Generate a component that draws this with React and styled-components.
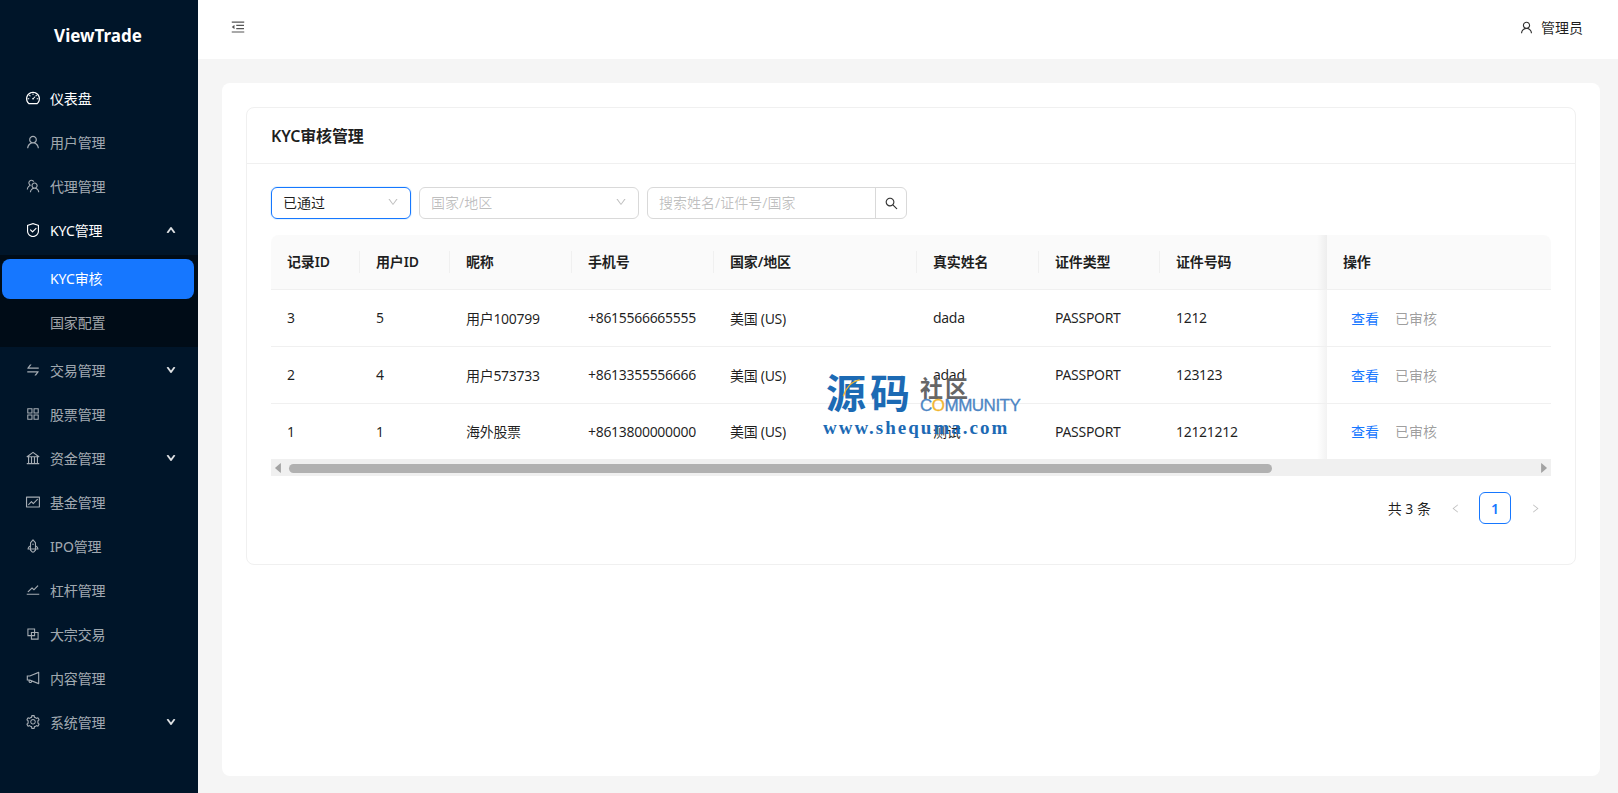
import React from "react";
import styled, { createGlobalStyle } from "styled-components";
import {
  AiOutlineDashboard,
  AiOutlineUser,
  AiOutlineTeam,
  AiOutlineSafety,
  AiOutlineSwap,
  AiOutlineAppstore,
  AiOutlineBank,
  AiOutlineFund,
  AiOutlineRocket,
  AiOutlineStock,
  AiOutlineBlock,
  AiOutlineNotification,
  AiOutlineSetting,
  AiOutlineMenuFold,
  AiOutlineSearch,
  AiOutlineDown,
  AiOutlineUp,
  AiOutlineLeft,
  AiOutlineRight,
  AiFillCaretLeft,
  AiFillCaretRight,
} from "react-icons/ai";

const menuTop = [
  { icon: AiOutlineDashboard, label: "仪表盘", bright: true },
  { icon: AiOutlineUser, label: "用户管理" },
  { icon: AiOutlineTeam, label: "代理管理" },
  { icon: AiOutlineSafety, label: "KYC管理", bright: true, arrow: "up" },
];

const menuBottom = [
  { icon: AiOutlineSwap, label: "交易管理", arrow: "down" },
  { icon: AiOutlineAppstore, label: "股票管理" },
  { icon: AiOutlineBank, label: "资金管理", arrow: "down" },
  { icon: AiOutlineFund, label: "基金管理" },
  { icon: AiOutlineRocket, label: "IPO管理" },
  { icon: AiOutlineStock, label: "杠杆管理" },
  { icon: AiOutlineBlock, label: "大宗交易" },
  { icon: AiOutlineNotification, label: "内容管理" },
  { icon: AiOutlineSetting, label: "系统管理", arrow: "down" },
];

const columns = [
  { title: "记录ID", width: 89 },
  { title: "用户ID", width: 90 },
  { title: "昵称", width: 122 },
  { title: "手机号", width: 142 },
  { title: "国家/地区", width: 203 },
  { title: "真实姓名", width: 122 },
  { title: "证件类型", width: 121 },
  { title: "证件号码", width: 167 },
];

const rows = [
  ["3", "5", "用户100799", "+8615566665555", "美国 (US)", "dada", "PASSPORT", "1212"],
  ["2", "4", "用户573733", "+8613355556666", "美国 (US)", "adad", "PASSPORT", "123123"],
  ["1", "1", "海外股票", "+8613800000000", "美国 (US)", "测试", "PASSPORT", "12121212"],
];

function MenuRow({ item }) {
  const Icon = item.icon;
  return (
    <MenuItem $bright={item.bright}>
      <Icon size={16} />
      <span>{item.label}</span>
      {item.arrow === "up" && <Arrow as={AiOutlineUp} />}
      {item.arrow === "down" && <Arrow as={AiOutlineDown} />}
    </MenuItem>
  );
}

function App() {
  return (
    <Layout>
      <GlobalStyle />
      <Sidebar>
        <Logo>ViewTrade</Logo>
        <Menu>
          {menuTop.map((item) => (
            <MenuRow key={item.label} item={item} />
          ))}
          <SubMenu>
            <SubItem $active>KYC审核</SubItem>
            <SubItem>国家配置</SubItem>
          </SubMenu>
          {menuBottom.map((item) => (
            <MenuRow key={item.label} item={item} />
          ))}
        </Menu>
      </Sidebar>
      <Main>
        <Header>
          <AiOutlineMenuFold size={16} color="#555" />
          <UserBox>
            <AiOutlineUser size={15} color="#333" />
            <span>管理员</span>
          </UserBox>
        </Header>
        <Content>
          <Panel>
            <Card>
              <CardTitle>KYC审核管理</CardTitle>
              <CardBody>
                <Filters>
                  <Select $width={140} $focused>
                    <span>已通过</span>
                    <AiOutlineDown size={12} color="#bfbfbf" />
                  </Select>
                  <Select $width={220} $placeholder>
                    <span>国家/地区</span>
                    <AiOutlineDown size={12} color="#bfbfbf" />
                  </Select>
                  <SearchBox>
                    <SearchText>搜索姓名/证件号/国家</SearchText>
                    <SearchButton>
                      <AiOutlineSearch size={15} color="#333" />
                    </SearchButton>
                  </SearchBox>
                </Filters>
                <Table>
                  <colgroup>
                    {columns.map((col) => (
                      <col key={col.title} style={{ width: col.width }} />
                    ))}
                    <col />
                  </colgroup>
                  <thead>
                    <tr>
                      {columns.map((col) => (
                        <HeadCell key={col.title}>{col.title}</HeadCell>
                      ))}
                      <FixedHead>操作</FixedHead>
                    </tr>
                  </thead>
                  <tbody>
                    {rows.map((row) => (
                      <BodyRow key={row[0]}>
                        {row.map((value, i) => (
                          <Cell key={i}>{value}</Cell>
                        ))}
                        <FixedCell>
                          <ViewLink>查看</ViewLink>
                          <DoneText>已审核</DoneText>
                        </FixedCell>
                      </BodyRow>
                    ))}
                  </tbody>
                </Table>
                <ScrollBar>
                  <AiFillCaretLeft size={14} color="#a3a3a3" />
                  <ScrollTrack>
                    <ScrollThumb />
                  </ScrollTrack>
                  <AiFillCaretRight size={14} color="#a3a3a3" />
                </ScrollBar>
                <Pagination>
                  <Total>共 3 条</Total>
                  <PageArrow>
                    <AiOutlineLeft size={11} />
                  </PageArrow>
                  <PageNumber>1</PageNumber>
                  <PageArrow>
                    <AiOutlineRight size={11} />
                  </PageArrow>
                </Pagination>
              </CardBody>
            </Card>
          </Panel>
        </Content>
      </Main>
      <Watermark>
        <MarkTop>
          <MarkBig>
            源码
            <MarkArc viewBox="0 0 30 30">
              <path d="M2 28 C6 14 16 4 28 2" fill="none" stroke="#f2b632" strokeWidth="2" />
            </MarkArc>
          </MarkBig>
          <MarkSide>
            <MarkCn>社区</MarkCn>
            <MarkEn>
              C<MarkO>O</MarkO>MMUNITY
            </MarkEn>
          </MarkSide>
        </MarkTop>
        <MarkUrl>www.shequma.com</MarkUrl>
      </Watermark>
    </Layout>
  );
}

const GlobalStyle = createGlobalStyle`
  html, body {
    margin: 0;
    padding: 0;
    height: 100%;
    overflow: hidden;
  }
  body {
    font-family: "Noto Sans", "Noto Sans CJK SC", sans-serif;
    font-size: 14px;
    color: rgba(0, 0, 0, 0.88);
  }
`;

const Layout = styled.div`
  display: flex;
  height: 793px;
  position: relative;
  background: #f5f5f5;
`;

const Sidebar = styled.aside`
  width: 198px;
  flex-shrink: 0;
  background: #001529;
`;

const Logo = styled.div`
  height: 71px;
  line-height: 71px;
  text-align: center;
  color: #fff;
  font-size: 17px;
  font-weight: 700;
  padding-right: 2px;
  box-sizing: border-box;
`;

const Menu = styled.nav`
  display: flex;
  flex-direction: column;
  padding-top: 6px;
`;

const MenuItem = styled.div`
  height: 40px;
  margin: 2px 0;
  display: flex;
  align-items: center;
  gap: 9px;
  padding: 0 22px 2px 25px;
  box-sizing: border-box;
  font-size: 14px;
  letter-spacing: -0.15px;
  color: ${(props) => (props.$bright ? "#fff" : "rgba(255, 255, 255, 0.65)")};
  svg {
    flex-shrink: 0;
  }
`;

const Arrow = styled.svg`
  margin-left: auto;
  width: 10px;
  height: 10px;
  stroke-width: 110px;
  stroke: currentColor;
  color: rgba(255, 255, 255, 0.75);
`;

const SubMenu = styled.div`
  background: #000c17;
  margin: 2px 0;
  padding: 4px 0;
  display: flex;
  flex-direction: column;
  gap: 4px;
`;

const SubItem = styled.div`
  height: 40px;
  margin: 0 4px 0 2px;
  padding: 0 0 2px 48px;
  box-sizing: border-box;
  display: flex;
  align-items: center;
  border-radius: 8px;
  letter-spacing: -0.15px;
  background: ${(props) => (props.$active ? "#1677ff" : "transparent")};
  color: ${(props) => (props.$active ? "#fff" : "rgba(255, 255, 255, 0.65)")};
`;

const Main = styled.div`
  flex: 1;
  min-width: 0;
  display: flex;
  flex-direction: column;
`;

const Header = styled.header`
  height: 59px;
  flex-shrink: 0;
  background: #fff;
  display: flex;
  align-items: center;
  justify-content: space-between;
  padding: 0 35px 5px 32px;
  box-sizing: border-box;
`;

const UserBox = styled.div`
  display: flex;
  align-items: center;
  gap: 7px;
  font-size: 14px;
`;

const Content = styled.main`
  flex: 1;
  padding: 24px 18px 17px 24px;
  min-height: 0;
`;

const Panel = styled.div`
  height: 100%;
  box-sizing: border-box;
  background: #fff;
  border-radius: 8px;
  padding: 24px 24px 0;
`;

const Card = styled.section`
  border: 1px solid #f0f0f0;
  border-radius: 8px;
  height: 458px;
  box-sizing: border-box;
`;

const CardTitle = styled.h2`
  margin: 0;
  padding: 0 24px 1px;
  height: 54px;
  display: flex;
  align-items: center;
  font-size: 16px;
  font-weight: 600;
  letter-spacing: -0.2px;
  border-bottom: 1px solid #f0f0f0;
`;

const CardBody = styled.div`
  padding: 23px 24px 0;
`;

const Filters = styled.div`
  display: flex;
  gap: 8px;
  margin-bottom: 16px;
`;

const Select = styled.div`
  width: ${(props) => props.$width}px;
  height: 32px;
  box-sizing: border-box;
  display: flex;
  align-items: center;
  justify-content: space-between;
  padding: 0 11px 2px 11px;
  border-radius: 6px;
  border: 1px solid ${(props) => (props.$focused ? "#1677ff" : "#d9d9d9")};
  box-shadow: ${(props) => (props.$focused ? "0 0 0 1px rgba(5, 145, 255, 0.1)" : "none")};
  color: ${(props) => (props.$placeholder ? "rgba(0, 0, 0, 0.25)" : "rgba(0, 0, 0, 0.88)")};
`;

const SearchBox = styled.div`
  width: 260px;
  height: 32px;
  box-sizing: border-box;
  display: flex;
  align-items: center;
  border: 1px solid #d9d9d9;
  border-radius: 6px;
`;

const SearchText = styled.div`
  flex: 1;
  padding: 0 0 2px 11px;
  color: rgba(0, 0, 0, 0.25);
`;

const SearchButton = styled.div`
  width: 30px;
  height: 100%;
  display: flex;
  align-items: center;
  justify-content: center;
  border-left: 1px solid #d9d9d9;
`;

const Table = styled.table`
  width: 1280px;
  table-layout: fixed;
  border-collapse: separate;
  border-spacing: 0;
  font-size: 14px;
`;

const HeadCell = styled.th`
  position: relative;
  height: 55px;
  padding: 0 16px 3px;
  box-sizing: border-box;
  background: #fafafa;
  border-bottom: 1px solid #f0f0f0;
  font-weight: 600;
  letter-spacing: -0.15px;
  text-align: left;
  white-space: nowrap;
  &:first-child {
    border-top-left-radius: 8px;
  }
  &:not(:first-child)::before {
    content: "";
    position: absolute;
    left: -1px;
    top: 16px;
    width: 1px;
    height: 22px;
    background: #f0f0f0;
  }
`;

const FixedHead = styled(HeadCell)`
  border-top-right-radius: 8px;
  &:not(:first-child)::before {
    top: 0;
    height: 100%;
    width: 10px;
    left: -10px;
    background: linear-gradient(to left, rgba(5, 5, 5, 0.05), rgba(5, 5, 5, 0));
  }
`;

const BodyRow = styled.tr`
  height: 57px;
  &:last-child {
    height: 56px;
  }
`;

const Cell = styled.td`
  padding: 0 16px 1px;
  border-bottom: 1px solid #f0f0f0;
  white-space: nowrap;
  box-sizing: border-box;
  letter-spacing: -0.3px;
`;

const FixedCell = styled(Cell)`
  position: relative;
  padding-left: 24px;
  letter-spacing: 0;
  &::before {
    content: "";
    position: absolute;
    top: 0;
    bottom: 0;
    left: -10px;
    width: 10px;
    background: linear-gradient(to left, rgba(5, 5, 5, 0.05), rgba(5, 5, 5, 0));
  }
`;

const ViewLink = styled.span`
  color: #1677ff;
  margin-right: 16px;
`;

const DoneText = styled.span`
  color: rgba(0, 0, 0, 0.4);
`;

const ScrollBar = styled.div`
  width: 1280px;
  height: 16px;
  background: #f0f0f0;
  display: flex;
  align-items: center;
  box-sizing: border-box;
`;

const ScrollTrack = styled.div`
  flex: 1;
  padding: 0 4px;
`;

const ScrollThumb = styled.div`
  width: 983px;
  height: 9px;
  border-radius: 5px;
  background: #b1b1b1;
`;

const Pagination = styled.div`
  width: 1280px;
  display: flex;
  align-items: center;
  justify-content: flex-end;
  margin-top: 16px;
  height: 32px;
  box-sizing: border-box;
`;

const Total = styled.span`
  margin-right: 8px;
`;

const PageArrow = styled.div`
  width: 32px;
  height: 32px;
  margin: 0 8px 0 0;
  display: flex;
  align-items: center;
  justify-content: center;
  color: rgba(0, 0, 0, 0.25);
  &:last-child {
    margin-right: 0;
  }
`;

const PageNumber = styled.div`
  width: 32px;
  height: 32px;
  margin-right: 8px;
  box-sizing: border-box;
  border: 1px solid #1677ff;
  border-radius: 6px;
  display: flex;
  align-items: center;
  justify-content: center;
  color: #1677ff;
  font-weight: 600;
`;

const Watermark = styled.div`
  position: absolute;
  left: 823px;
  top: 368px;
  width: 200px;
  color: #1c6ab4;
  pointer-events: none;
`;

const MarkTop = styled.div`
  display: flex;
  align-items: flex-start;
  padding-left: 3px;
  gap: 6px;
`;

const MarkBig = styled.div`
  position: relative;
  font-family: "Noto Sans CJK SC", sans-serif;
  font-size: 40px;
  font-weight: 700;
  line-height: 46px;
  letter-spacing: 4px;
`;

const MarkArc = styled.svg`
  position: absolute;
  left: 16px;
  top: 9px;
  width: 19px;
  height: 22px;
`;

const MarkSide = styled.div`
  display: flex;
  flex-direction: column;
  padding-top: 7px;
`;

const MarkCn = styled.div`
  font-family: "Noto Sans CJK SC", sans-serif;
  font-size: 23px;
  font-weight: 700;
  line-height: 24px;
  letter-spacing: 2px;
  color: #666;
`;

const MarkEn = styled.div`
  font-family: "Liberation Sans", sans-serif;
  font-size: 17px;
  line-height: 14px;
  letter-spacing: -0.5px;
  color: #4d86c4;
  -webkit-text-stroke: 0.3px #4d86c4;
  white-space: nowrap;
`;

const MarkO = styled.span`
  color: #f2b632;
  -webkit-text-stroke: 0.3px #f2b632;
`;

const MarkUrl = styled.div`
  font-family: "Liberation Serif", serif;
  font-size: 19px;
  font-weight: 700;
  line-height: 18px;
  letter-spacing: 2px;
  margin-top: 5px;
  white-space: nowrap;
`;

export default App;
